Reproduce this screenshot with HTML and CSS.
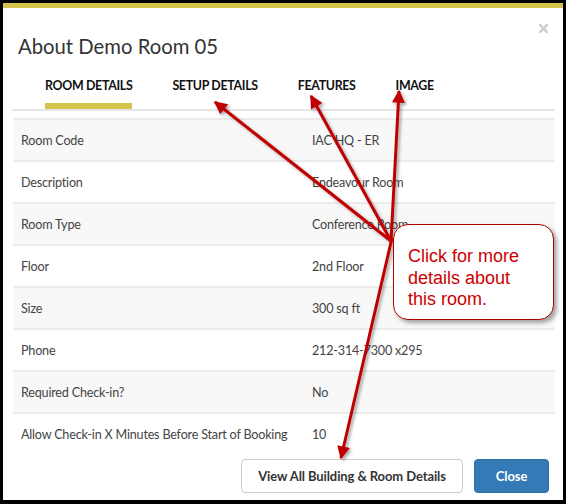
FILE: index.html
```html
<!DOCTYPE html>
<html>
<head>
<meta charset="utf-8">
<link rel="stylesheet" href="styles.css">
</head>
<body>
<div class="modal">
  <div class="band"></div>
  <div class="head">
    <div class="close-row">
      <svg class="close" width="9" height="9" viewBox="0 0 9 9"><path d="M1 1L8 8M8 1L1 8" stroke="#cfcfcf" stroke-width="2.6" stroke-linecap="square"/></svg>
    </div>
    <h1 class="title">About Demo Room 05</h1>
  </div>
  <ul class="tabs">
    <li class="tab active">Room Details</li>
    <li class="tab">Setup Details</li>
    <li class="tab">Features</li>
    <li class="tab">Image</li>
  </ul>
  <div class="details">
    <div class="row"><span class="label">Room Code</span><span>IAC HQ - ER</span></div>
    <div class="row"><span class="label">Description</span><span>Endeavour Room</span></div>
    <div class="row"><span class="label">Room Type</span><span>Conference Room</span></div>
    <div class="row"><span class="label">Floor</span><span>2nd Floor</span></div>
    <div class="row"><span class="label">Size</span><span>300 sq ft</span></div>
    <div class="row"><span class="label">Phone</span><span>212-314-7300 x295</span></div>
    <div class="row"><span class="label">Required Check-in?</span><span>No</span></div>
    <div class="row"><span class="label">Allow Check-in X Minutes Before Start of Booking</span><span>10</span></div>
  </div>
  <div class="footer">
    <button class="btn btn-default">View All Building &amp; Room Details</button>
    <button class="btn btn-primary">Close</button>
  </div>

  <svg class="arrows" width="566" height="504" viewBox="0 0 566 504">
    <defs>
      <marker id="head" viewBox="0 0 10 10" refX="9" refY="5" markerUnits="userSpaceOnUse" markerWidth="15" markerHeight="13" orient="auto">
        <path d="M0 0L10 5L0 10Z" fill="#c00000"/>
      </marker>
      <filter id="shadow" x="-20%" y="-20%" width="140%" height="140%">
        <feDropShadow dx="2" dy="2" stdDeviation="1.5" flood-color="#000" flood-opacity="0.35"/>
      </filter>
    </defs>
    <g stroke="#c00000" stroke-width="3" fill="none" marker-end="url(#head)" filter="url(#shadow)">
      <line x1="391" y1="241" x2="215" y2="102"/>
      <line x1="391" y1="241" x2="311" y2="96"/>
      <line x1="391" y1="241" x2="399" y2="91"/>
      <line x1="392" y1="238" x2="341" y2="458"/>
    </g>
  </svg>

  <div class="callout">Click for more<br>details about<br>this room.</div>
</div>
</body>
</html>
```
FILE: styles.css
```css
* { box-sizing: border-box; }
html, body { margin: 0; padding: 0; background: #000; }
body { width: 566px; height: 504px; overflow: hidden; }

.modal {
  position: relative;
  width: 566px;
  height: 504px;
  border: 3px solid #000;
  border-bottom-width: 4px;
  background: #fff;
  display: flex;
  flex-direction: column;
  font-family: Lato, "Liberation Sans", sans-serif;
  color: #333;
}

.band { height: 5px; background: #d4c44c; flex: none; }

.head { padding: 17px 15px 0 15px; }
.close-row { display: flex; justify-content: flex-end; height: 8px; }
.close { display: block; margin-top: -1px; }
.title {
  margin: 1px 0 0 0;
  font-size: 20.3px;
  line-height: 24px;
  font-weight: 400;
  color: #333;
}

.tabs {
  list-style: none;
  margin: 20px 8px 0 9px;
  padding: 0 0 0 33px;
  display: flex;
  gap: 40px;
  border-bottom: 2px solid #e6e6e6;
}
.tab {
  font-size: 12.4px;
  line-height: 16px;
  font-weight: 700;
  text-transform: uppercase;
  letter-spacing: -0.32px;
  color: #111;
  padding-bottom: 9px;
  border-bottom: 6px solid transparent;
  white-space: nowrap;
}
.tab.active { border-bottom-color: #d4c44c; }

.details {
  margin: 7px 8px 0 10px;
  font-size: 12.6px;
  letter-spacing: -0.2px;
  color: #444;
}
.row {
  display: grid;
  grid-template-columns: 291px 1fr;
  align-items: center;
  height: 42px;
  border-top: 2px solid #ebebeb;
  padding-top: 2px;
}
.row:nth-child(odd) { background: #f8f8f8; }
.row span { padding: 0 8px; white-space: nowrap; line-height: 16px; }

.footer {
  display: flex;
  justify-content: flex-end;
  gap: 11px;
  padding: 5px 14px 0 0;
}
.btn {
  height: 34px;
  border-radius: 4px;
  font-family: Lato, "Liberation Sans", sans-serif;
  font-size: 13px;
  letter-spacing: -0.1px;
  font-weight: 700;
  padding: 0;
  white-space: nowrap;
  cursor: pointer;
}
.btn-default { width: 222px; background: #fff; border: 1px solid #ccc; color: #333; }
.btn-primary { width: 75px; background: #337ab7; border: 1px solid #2e6da4; color: #fff; }

.arrows { position: absolute; left: -3px; top: -3px; pointer-events: none; }

.callout {
  position: absolute;
  left: 390px;
  top: 221px;
  width: 161px;
  height: 96px;
  border: 1.5px solid #b00000;
  border-radius: 15px;
  background: #fff;
  box-shadow: 3px 3px 4px rgba(0,0,0,0.35);
  padding: 21px 8px 0 14px;
  font-family: "Liberation Sans", Arial, sans-serif;
  font-size: 18px;
  line-height: 21.5px;
  color: #cc0000;
}
```
